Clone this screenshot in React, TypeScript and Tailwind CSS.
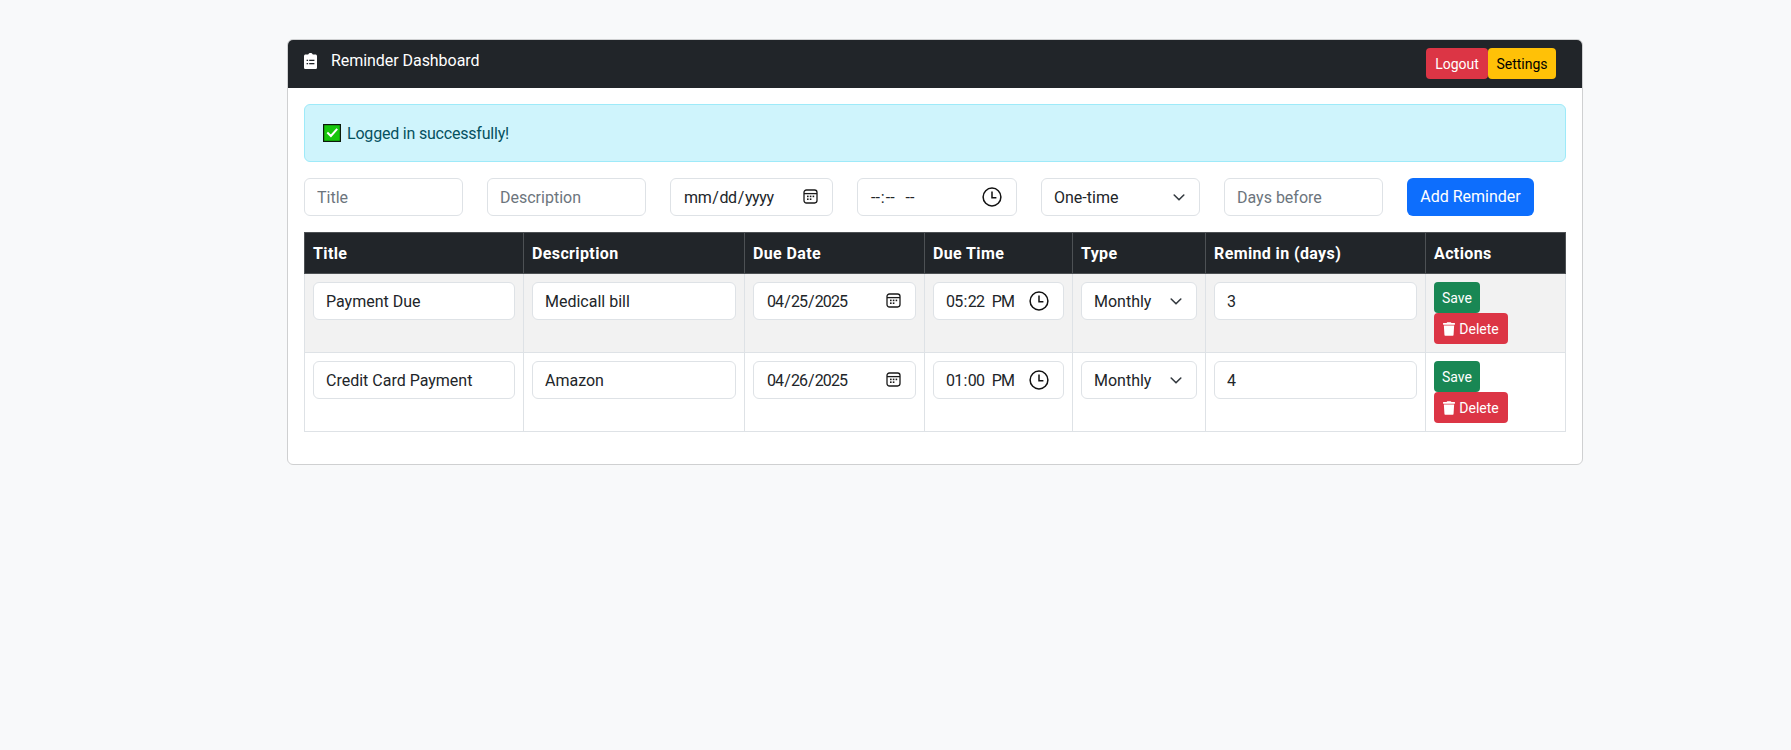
import React from "react";
import { FaTrash } from "react-icons/fa";

const inputCls =
  "block h-[38px] rounded-md border border-[#dee2e6] bg-white px-3 text-[16px] text-[#212529] placeholder:text-[#6c757d] outline-none";
const nativeCls = " pt-[1px] [&::-webkit-calendar-picker-indicator]:opacity-0";

function Chevron() {
  return (
    <svg className="absolute right-[15px] top-[15px] w-3 h-[9px] pointer-events-none" viewBox="0 0 12 9" fill="none">
      <path d="m1.2 2 4.8 4.8L10.8 2" stroke="#343a40" strokeWidth="1.6" strokeLinecap="round" strokeLinejoin="round" />
    </svg>
  );
}

function TypeSelect({ value, options }: { value: string; options: string[] }) {
  return (
    <div className="relative w-full">
      <select defaultValue={value} className={inputCls + " w-full appearance-none pt-[1px] pr-9"}>
        {options.map((o) => (
          <option key={o}>{o}</option>
        ))}
      </select>
      <Chevron />
    </div>
  );
}

function CalendarIcon() {
  return (
    <svg className="absolute right-[15px] top-[11px] w-[15px] h-[15px] pointer-events-none" viewBox="0 0 15 15" fill="none">
      <rect x="1" y="1" width="13" height="13" rx="2.4" stroke="#1a1a1a" strokeWidth="1.3" />
      <path d="M1 4.6h13" stroke="#1a1a1a" strokeWidth="1.3" />
      <g fill="#1a1a1a">
        <rect x="4" y="6.6" width="1.6" height="1.6" />
        <rect x="6.8" y="6.6" width="1.6" height="1.6" />
        <rect x="9.6" y="6.6" width="1.6" height="1.6" />
        <rect x="4" y="9.4" width="1.6" height="1.6" />
        <rect x="6.8" y="9.4" width="1.6" height="1.6" />
      </g>
    </svg>
  );
}

function ClockIcon() {
  return (
    <svg className="absolute right-[15px] top-[9px] w-[20px] h-[20px] pointer-events-none" viewBox="0 0 20 20" fill="none">
      <circle cx="10" cy="10" r="8.9" stroke="#111" strokeWidth="1.5" />
      <path d="M10 4.6V10.8H14.4" stroke="#111" strokeWidth="1.5" />
    </svg>
  );
}

function DateField({ value, track }: { value?: string; track: string }) {
  return (
    <div className="relative w-full">
      <input type="date" defaultValue={value} className={inputCls + nativeCls + " w-full " + track} />
      <CalendarIcon />
    </div>
  );
}

function TimeField({ value, track }: { value?: string; track: string }) {
  return (
    <div className="relative w-full">
      <input type="time" defaultValue={value} className={inputCls + nativeCls + " w-full " + track} />
      <ClockIcon />
    </div>
  );
}

function ClipboardIcon() {
  return (
    <svg className="w-[13px] h-[16px]" viewBox="0 0 13 16">
      <path
        fill="#fff"
        d="M4.2 1.5C4.4.6 5.3 0 6.5 0s2.1.6 2.3 1.5H11.4c.9 0 1.6.7 1.6 1.6v11.3c0 .9-.7 1.6-1.6 1.6H1.6C.7 16 0 15.3 0 14.4V3.1C0 2.2.7 1.5 1.6 1.5Z"
      />
      <g fill="#212529">
        <rect x="2.6" y="6.7" width="1.5" height="1.3" />
        <rect x="5.2" y="6.7" width="5.2" height="1.3" />
        <rect x="2.6" y="10" width="1.5" height="1.3" />
        <rect x="5.2" y="10" width="5.2" height="1.3" />
      </g>
    </svg>
  );
}

function CheckEmoji() {
  return (
    <svg className="w-[18px] h-[18px] shrink-0 mr-[6px]" viewBox="0 0 18 18">
      <rect x="0.6" y="0.6" width="16.8" height="16.8" fill="#16c60c" stroke="#0b1a0b" strokeWidth="1.2" />
      <path d="M4.3 8.6 7.9 12 14.2 4.8" fill="none" stroke="#fff" strokeWidth="2" />
    </svg>
  );
}

const rows = [
  { title: "Payment Due", desc: "Medicall bill", date: "2025-04-25", time: "17:22", days: "3" },
  { title: "Credit Card Payment", desc: "Amazon", date: "2025-04-26", time: "13:00", days: "4" },
];

const headers = ["Title", "Description", "Due Date", "Due Time", "Type", "Remind in (days)", "Actions"];
const types = ["One-time", "Monthly", "Yearly"];

export default function App() {
  return (
    <div className="min-h-screen bg-[#f8f9fa] pt-[39px] pl-[287px] font-['Roboto',sans-serif] text-[16px] leading-6 text-[#212529]">
      <div className="w-[1296px] rounded-md border border-[#cfd0d1] bg-white">
        <div className="flex items-start justify-between h-[48px] rounded-t-[5px] bg-[#212529] pl-4 pr-[26px] pt-2 text-white">
          <div className="flex items-center h-[24px] mt-[1px]">
            <ClipboardIcon />
            <span className="ml-[14px] tracking-[-0.05px]">Reminder Dashboard</span>
          </div>
          <div className="flex">
            <button className="h-[31px] w-[62px] rounded bg-[#dc3545] text-[14px] text-white">Logout</button>
            <button className="h-[31px] w-[68px] rounded bg-[#ffc107] text-[14px] text-black">Settings</button>
          </div>
        </div>
        <div className="p-4">
          <div className="mb-4 flex h-[58px] items-center rounded-md border border-[#9eeaf9] bg-[#cff4fc] px-[18px] text-[#055160]">
            <CheckEmoji />
            <span className="pt-[2px] tracking-[-0.2px]">Logged in successfully!</span>
          </div>
          <div className="mb-4 flex gap-[24px]">
            <input className={inputCls + " w-[159px]"} placeholder="Title" />
            <input className={inputCls + " w-[159px]"} placeholder="Description" />
            <div className="w-[163px]">
              <DateField track="tracking-[-0.4px]" />
            </div>
            <div className="w-[160px]">
              <TimeField track="tracking-[0.8px] [&::-webkit-datetime-edit-ampm-field]:ml-[7px]" />
            </div>
            <div className="w-[159px]">
              <TypeSelect value="One-time" options={types} />
            </div>
            <input className={inputCls + " w-[159px]"} placeholder="Days before" />
            <button className="h-[38px] w-[127px] rounded-md bg-[#0d6efd] text-white">Add Reminder</button>
          </div>
          <table className="mb-4 w-[1261px] table-fixed border-collapse">
            <colgroup>
              <col className="w-[219px]" />
              <col className="w-[221px]" />
              <col className="w-[180px]" />
              <col className="w-[148px]" />
              <col className="w-[133px]" />
              <col className="w-[220px]" />
              <col className="w-[140px]" />
            </colgroup>
            <thead>
              <tr className="bg-[#212529] text-white">
                {headers.map((h) => (
                  <th key={h} className="border border-[#4d5154] p-2 pt-[9px] pb-[7px] text-left font-bold tracking-[0.38px]">
                    {h}
                  </th>
                ))}
              </tr>
            </thead>
            <tbody>
              {rows.map((r, i) => (
                <tr key={r.title} className={i === 0 ? "bg-[#f2f2f2]" : "bg-white"}>
                  <td className="border border-[#dee2e6] p-2 align-top">
                    <input className={inputCls + " w-full"} defaultValue={r.title} />
                  </td>
                  <td className="border border-[#dee2e6] p-2 align-top">
                    <input className={inputCls + " w-full"} defaultValue={r.desc} />
                  </td>
                  <td className="border border-[#dee2e6] p-2 align-top">
                    <DateField value={r.date} track="tracking-[-0.9px]" />
                  </td>
                  <td className="border border-[#dee2e6] p-2 align-top">
                    <TimeField value={r.time} track="tracking-[-0.7px] pl-[11px] [&::-webkit-datetime-edit-ampm-field]:ml-[4px]" />
                  </td>
                  <td className="border border-[#dee2e6] p-2 align-top">
                    <TypeSelect value="Monthly" options={types} />
                  </td>
                  <td className="border border-[#dee2e6] p-2 align-top">
                    <input className={inputCls + " w-full"} defaultValue={r.days} />
                  </td>
                  <td className="border border-[#dee2e6] p-2 align-top">
                    <div className="flex flex-col items-start">
                      <button className="h-[31px] w-[46px] rounded bg-[#198754] text-[14px] text-white">Save</button>
                      <button className="flex h-[31px] w-[74px] items-center justify-center gap-1 rounded bg-[#dc3545] text-[14px] text-white">
                        <FaTrash className="w-3 h-[14px]" />
                        Delete
                      </button>
                    </div>
                  </td>
                </tr>
              ))}
            </tbody>
          </table>
        </div>
      </div>
    </div>
  );
}
